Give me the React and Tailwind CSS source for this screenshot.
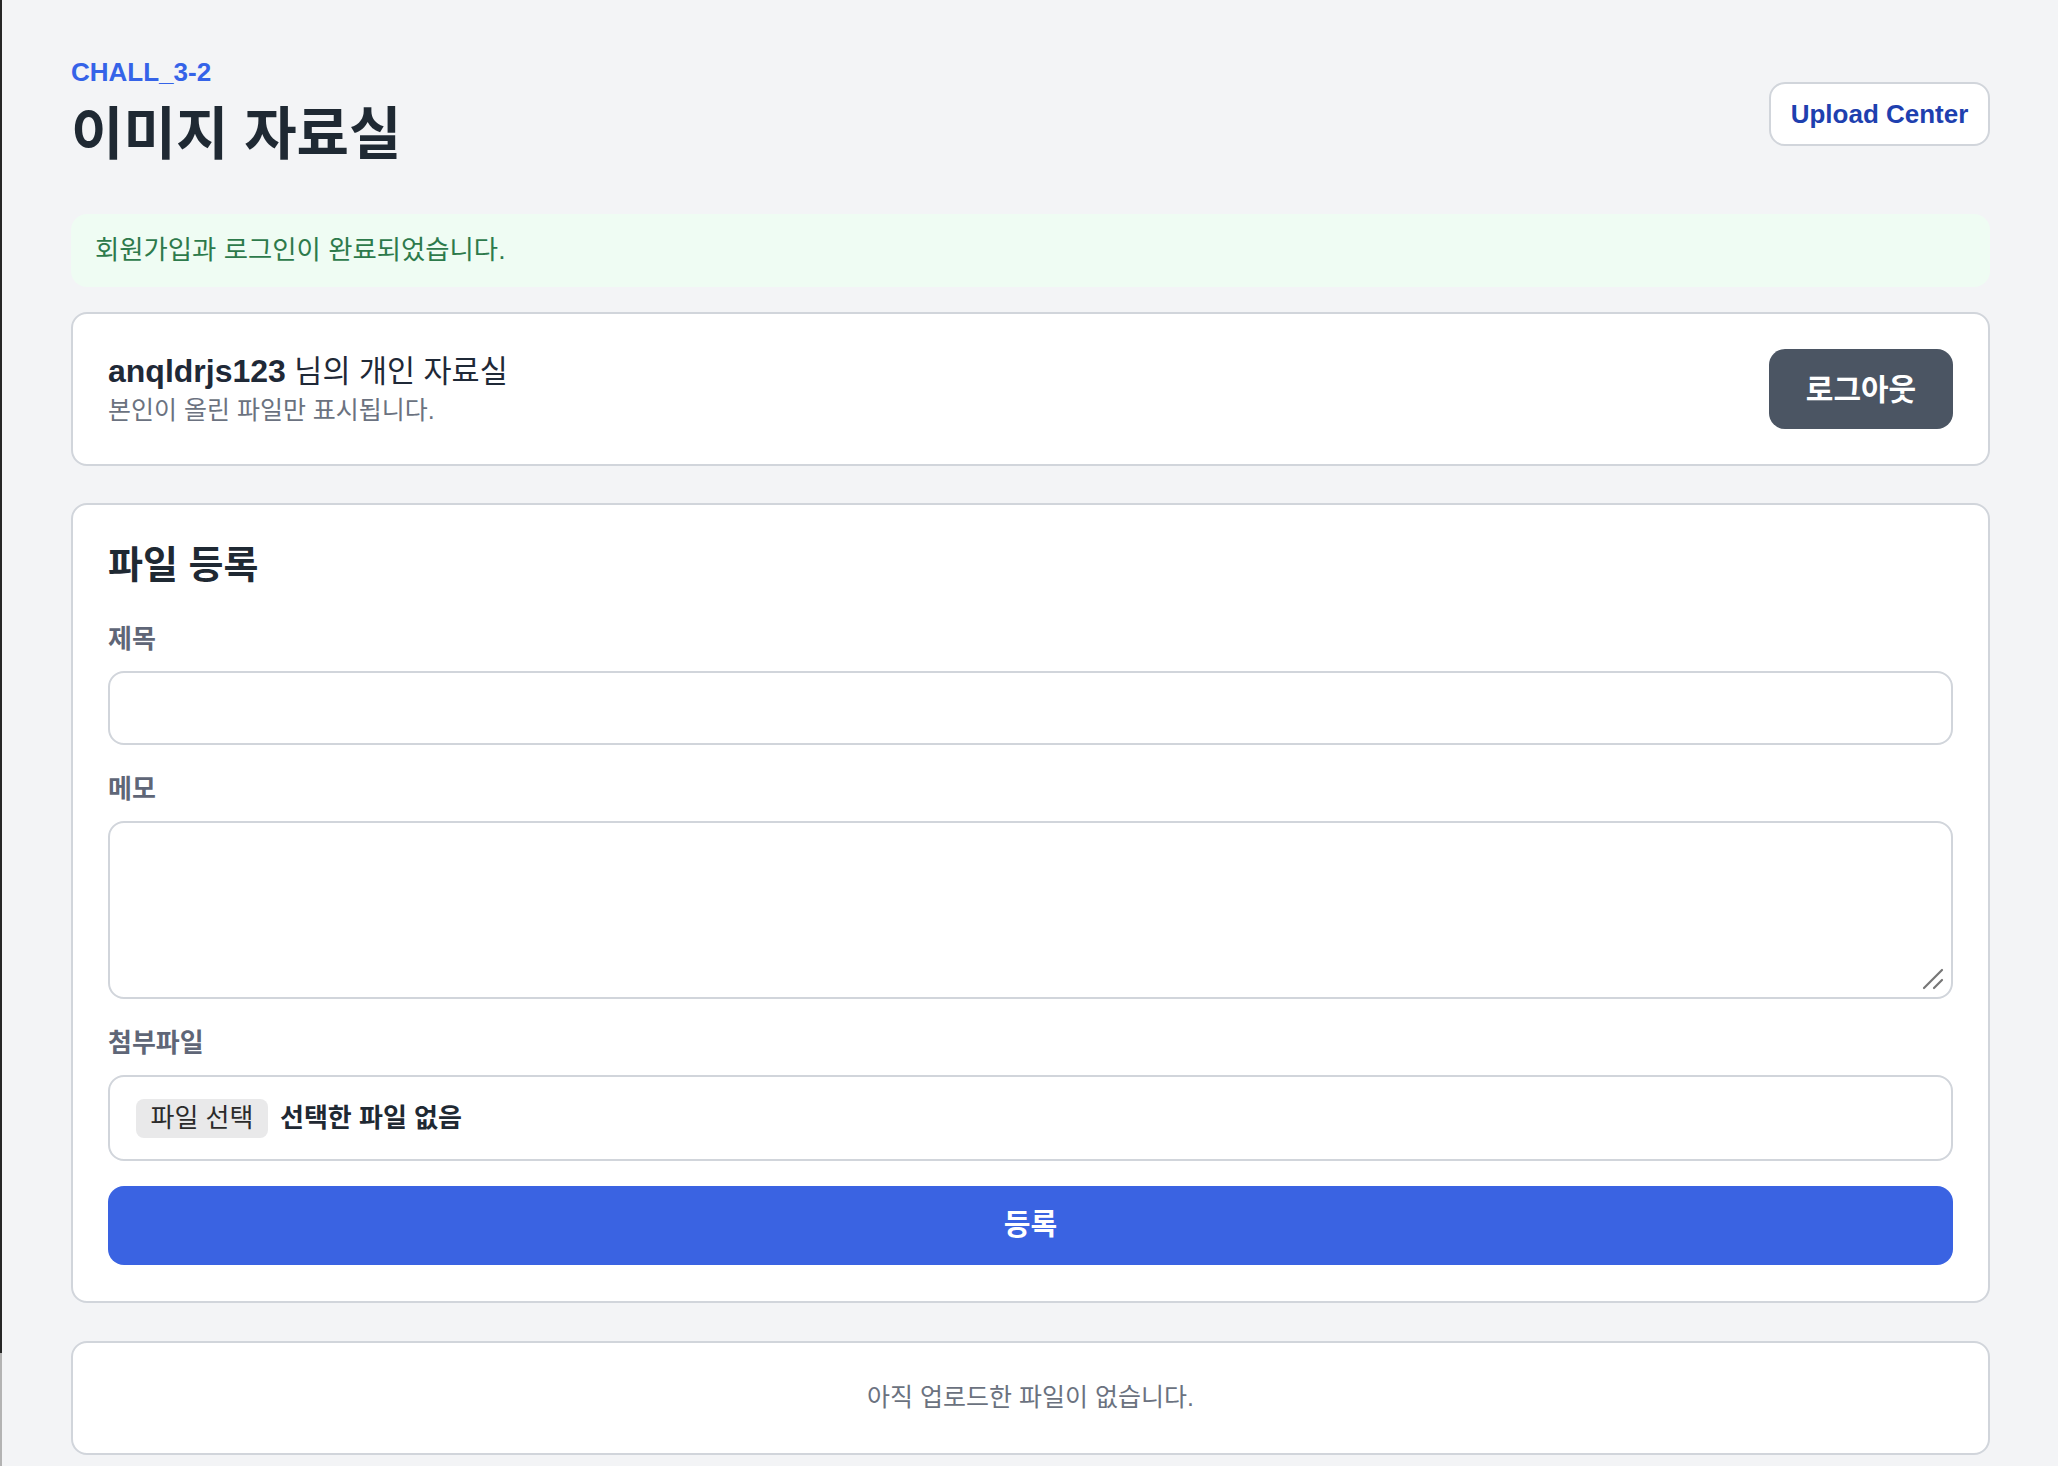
import { useState } from "react";

const field =
  "block w-full rounded-[16px] border-2 border-[#d1d5db] bg-white px-[24px] text-[28px] text-[#1f2937] outline-none";

function Label({ htmlFor, children }) {
  return (
    <label
      htmlFor={htmlFor}
      className="mb-[12px] block text-[26px] font-bold leading-[40px] text-[#5f6677]"
    >
      {children}
    </label>
  );
}

// two-stroke grip drawn in the textarea corner
function ResizeGrip() {
  return (
    <svg
      width="22"
      height="22"
      viewBox="0 0 22 22"
      className="pointer-events-none absolute bottom-[9px] right-[9px]"
    >
      <path
        d="M2 20 L20 2 M12 20 L20 12"
        stroke="#777"
        strokeWidth="2.2"
        strokeLinecap="round"
      />
    </svg>
  );
}

export default function App() {
  const [{ title, memo }, setPost] = useState({ title: "", memo: "" });

  function handleChange({ target }) {
    setPost((post) => ({ ...post, [target.name]: target.value }));
  }

  return (
    <div className="flex min-h-screen bg-[#f3f4f6] font-['Liberation_Sans','Noto_Sans_CJK_KR',sans-serif]">
      <div className="flex w-[2px] shrink-0 flex-col">
        <div className="h-[1353px] bg-[#262626]" />
        <div className="flex-1 bg-[#b3b3b3]" />
      </div>

      <main className="flex-1 pb-[13px] pl-[69px] pr-[68px] pt-[54px]">
        <header className="flex items-center justify-between">
          <div>
            <p className="text-[26px] font-bold leading-[36px] text-[#3563e8]">
              CHALL_3-2
            </p>
            <h1 className="mt-[6px] text-[57px] font-bold leading-[76px] text-[#1f2933]">
              이미지 자료실
            </h1>
          </div>
          <button className="mt-[2px] h-[64px] w-[221px] rounded-[16px] border-2 border-[#d1d5db] bg-white text-[26px] font-bold text-[#1e40af]">
            Upload Center
          </button>
        </header>

        <div className="mt-[42px] flex h-[73px] items-center rounded-[16px] bg-[#effcf3] px-[24px] text-[26.4px] text-[#2d7a4b]">
          회원가입과 로그인이 완료되었습니다.
        </div>

        <section className="mt-[25px] flex items-center justify-between rounded-[16px] border-2 border-[#d1d5db] bg-white px-[35px] py-[35px]">
          <div>
            <p className="text-[32px] leading-[42px] text-[#1f2937]">
              <span className="font-bold">anqldrjs123</span>
              <span className="text-[30.5px]"> 님의 개인 자료실</span>
            </p>
            <p className="text-[25px] leading-[36px] text-[#6b7280]">
              본인이 올린 파일만 표시됩니다.
            </p>
          </div>
          <button className="h-[80px] w-[184px] rounded-[16px] bg-[#4b5563] text-[30px] font-bold text-white">
            로그아웃
          </button>
        </section>

        <form
          onSubmit={(evt) => evt.preventDefault()}
          className="mt-[37px] rounded-[16px] border-2 border-[#d1d5db] bg-white px-[35px] pb-[36px] pt-[32px]"
        >
          <h2 className="mb-[26px] text-[38px] font-bold leading-[56px] text-[#1f2933]">
            파일 등록
          </h2>

          <div className="flex flex-col gap-[24px]">
            <div>
              <Label htmlFor="title">제목</Label>
              <input
                id="title"
                name="title"
                type="text"
                value={title}
                onChange={handleChange}
                className={`${field} h-[74px]`}
              />
            </div>

            <div>
              <Label htmlFor="memo">메모</Label>
              <div className="relative">
                <textarea
                  id="memo"
                  name="memo"
                  value={memo}
                  onChange={handleChange}
                  className={`${field} h-[178px] resize-none py-[16px]`}
                />
                <ResizeGrip />
              </div>
            </div>

            <div>
              <Label htmlFor="file">첨부파일</Label>
              <div className="flex h-[86px] items-center gap-[12px] rounded-[16px] border-2 border-[#d1d5db] bg-white px-[26px]">
                <label
                  htmlFor="file"
                  className="flex h-[39px] w-[132px] cursor-pointer items-center justify-center rounded-[8px] bg-[#e9e9ea] text-[26px] text-[#2b2b2b]"
                >
                  파일 선택
                </label>
                <span className="text-[26px] font-bold text-[#1f2933]">
                  선택한 파일 없음
                </span>
                <input id="file" type="file" className="hidden" />
              </div>
            </div>

            <button
              type="submit"
              className="mt-[1px] h-[79px] w-full rounded-[16px] bg-[#3a63e2] text-[29px] font-bold text-white"
            >
              등록
            </button>
          </div>
        </form>

        <section className="mt-[38px] flex h-[114px] items-center justify-center rounded-[16px] border-2 border-[#d1d5db] bg-white text-[25px] text-[#6b7280]">
          아직 업로드한 파일이 없습니다.
        </section>
      </main>
    </div>
  );
}
